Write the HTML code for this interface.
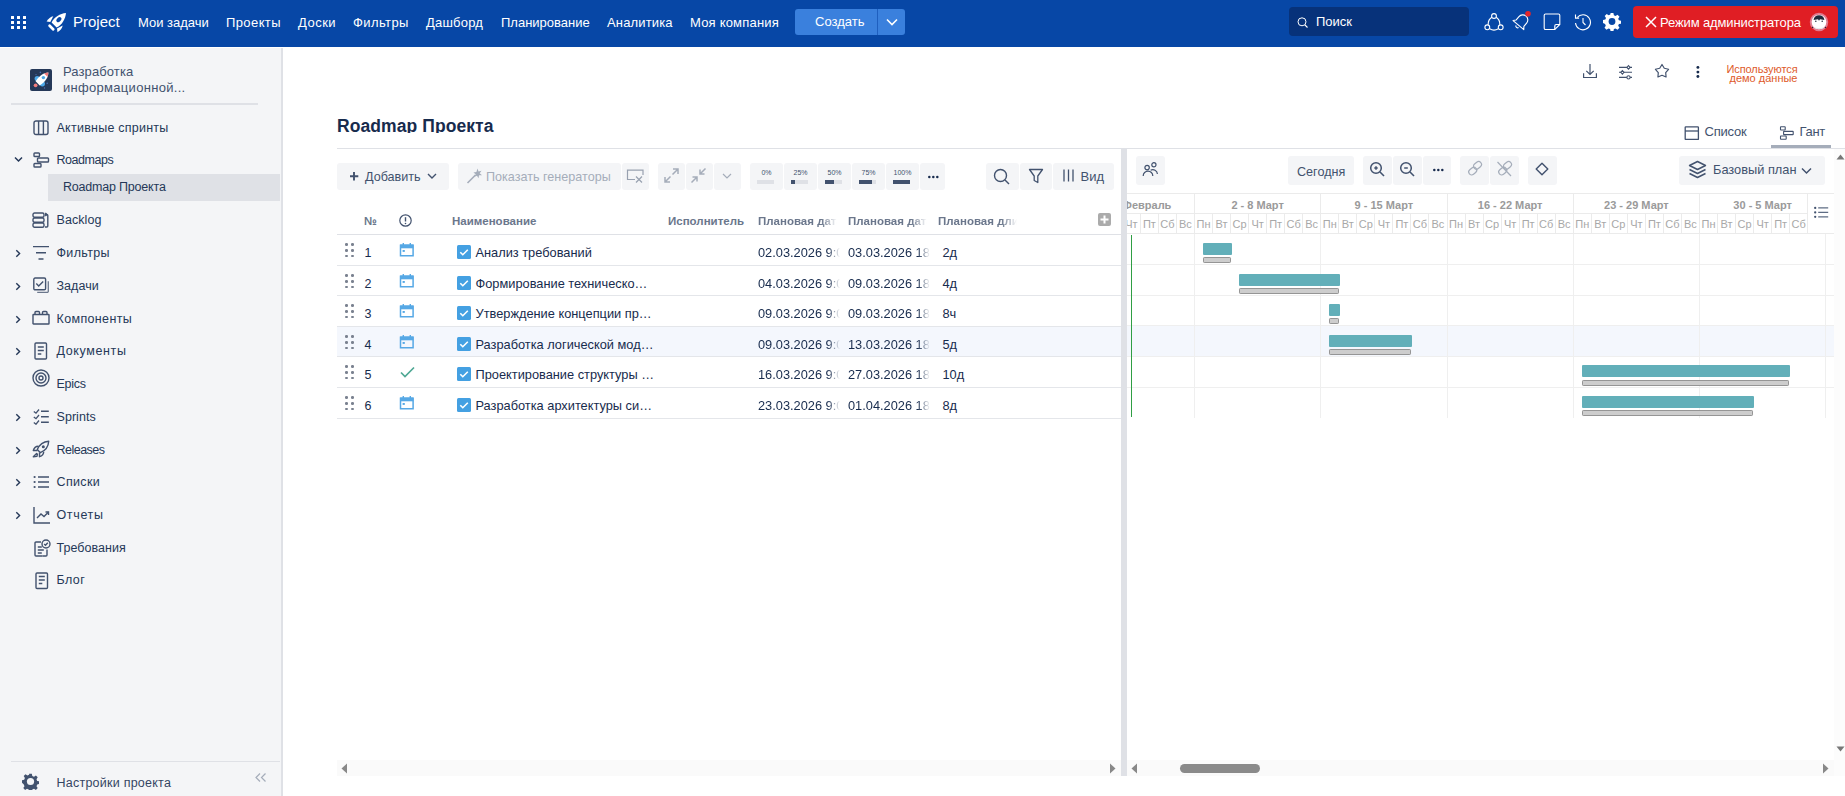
<!DOCTYPE html><html><head><meta charset="utf-8"><style>
html,body{margin:0;padding:0;width:1845px;height:796px;overflow:hidden;background:#fff;font-family:"Liberation Sans",sans-serif;}
.t{position:absolute;white-space:nowrap;}
.r{position:absolute;}
</style></head><body>
<div class="r" style="left:0px;top:0px;width:1845px;height:47px;background:#0747A6;"></div>
<div class="r" style="left:11px;top:15.5px;width:3px;height:3px;background:#fff;border-radius:0.3px"></div>
<div class="r" style="left:11px;top:20.5px;width:3px;height:3px;background:#fff;border-radius:0.3px"></div>
<div class="r" style="left:11px;top:25.5px;width:3px;height:3px;background:#fff;border-radius:0.3px"></div>
<div class="r" style="left:17px;top:15.5px;width:3px;height:3px;background:#fff;border-radius:0.3px"></div>
<div class="r" style="left:17px;top:20.5px;width:3px;height:3px;background:#fff;border-radius:0.3px"></div>
<div class="r" style="left:17px;top:25.5px;width:3px;height:3px;background:#fff;border-radius:0.3px"></div>
<div class="r" style="left:23px;top:15.5px;width:3px;height:3px;background:#fff;border-radius:0.3px"></div>
<div class="r" style="left:23px;top:20.5px;width:3px;height:3px;background:#fff;border-radius:0.3px"></div>
<div class="r" style="left:23px;top:25.5px;width:3px;height:3px;background:#fff;border-radius:0.3px"></div>
<svg class="r" style="left:40px;top:8px;" width="32" height="30" viewBox="0 0 32 30" fill="none"><path d="M26 4.9C20 5.5 14.2 9 11.6 14.4l5 5C22 16.8 25.4 11 26 4.9z" fill="#fff"/><ellipse cx="18.9" cy="11.6" rx="2" ry="2.9" transform="rotate(45 18.9 11.6)" fill="#0747A6"/><path d="M6.6 13.4C8.3 10.5 10.8 8.6 13.3 8.2L10.3 13.9z" fill="#fff"/><path d="M17.5 24.3C20.4 22.6 22.3 20.1 22.7 17.6L17 20.6z" fill="#fff"/><rect x="7.6" y="18.2" width="7.6" height="2.6" rx="1" transform="rotate(45 11.4 19.5)" fill="#fff"/></svg>
<div class="t " style="left:73px;top:11.80px;font-size:15px;line-height:20px;color:#fff;font-weight:normal;">Project</div>
<div class="t " style="left:138px;top:14.00px;font-size:13px;line-height:17px;color:#fff;font-weight:normal;letter-spacing:0px">Мои задачи</div>
<div class="t " style="left:226px;top:14.00px;font-size:13px;line-height:17px;color:#fff;font-weight:normal;letter-spacing:0.4px">Проекты</div>
<div class="t " style="left:298px;top:14.00px;font-size:13px;line-height:17px;color:#fff;font-weight:normal;letter-spacing:0.5px">Доски</div>
<div class="t " style="left:353px;top:14.00px;font-size:13px;line-height:17px;color:#fff;font-weight:normal;letter-spacing:0.4px">Фильтры</div>
<div class="t " style="left:426px;top:14.00px;font-size:13px;line-height:17px;color:#fff;font-weight:normal;letter-spacing:0.2px">Дашборд</div>
<div class="t " style="left:501px;top:14.00px;font-size:13px;line-height:17px;color:#fff;font-weight:normal;letter-spacing:0px">Планирование</div>
<div class="t " style="left:607px;top:14.00px;font-size:13px;line-height:17px;color:#fff;font-weight:normal;letter-spacing:0.15px">Аналитика</div>
<div class="t " style="left:690px;top:14.00px;font-size:13px;line-height:17px;color:#fff;font-weight:normal;letter-spacing:0.2px">Моя компания</div>
<div class="r" style="left:795px;top:9px;width:110px;height:26px;background:#3A80DD;border-radius:3px"></div>
<div class="r" style="left:877px;top:9px;width:1px;height:26px;background:#1F5FBF;"></div>
<div class="t " style="left:815px;top:12.50px;font-size:13px;line-height:17px;color:#fff;font-weight:normal;">Создать</div>
<svg class="r" style="left:886px;top:18px;" width="12" height="8" viewBox="0 0 12 8" fill="none"><path d="M1 1.5l5 5 5-5" stroke="#fff" stroke-width="1.6"/></svg>
<div class="r" style="left:1289px;top:7px;width:180px;height:29px;background:#07327A;border-radius:4px"></div>
<svg class="r" style="left:1297px;top:17px;" width="12" height="11" viewBox="0 0 12 11" fill="none"><circle cx="5" cy="4.8" r="4" stroke="#fff" stroke-width="1"/><path d="M8 8l2.5 2.5" stroke="#fff" stroke-width="1.1"/></svg>
<div class="t " style="left:1316px;top:13.00px;font-size:13px;line-height:17px;color:#fff;font-weight:normal;">Поиск</div>
<svg class="r" style="left:1484px;top:12px;" width="20" height="20" viewBox="0 0 20 20" fill="none"><circle cx="10" cy="4" r="2.4" stroke="#fff" stroke-width="1.1"/><circle cx="3.3" cy="15.3" r="2.4" stroke="#fff" stroke-width="1.1"/><circle cx="16.7" cy="15.3" r="2.4" stroke="#fff" stroke-width="1.1"/><path d="M7.8 5.3C5.5 6.8 4 9.5 4.2 12.9M12.2 5.3c2.3 1.5 3.8 4.2 3.6 7.6M5.7 16.8c2.6 1.6 6 1.6 8.6 0" stroke="#fff" stroke-width="1.1"/></svg>
<svg class="r" style="left:1511px;top:11px;" width="20" height="21" viewBox="0 0 20 21" fill="none"><g transform="rotate(40 10 11)"><path d="M10 3.2a5 5 0 0 0-5 5v4.3l-2 2.5h14l-2-2.5V8.2a5 5 0 0 0-5-5z" stroke="#fff" stroke-width="1.1" stroke-linejoin="round"/><path d="M8.3 16.8a1.8 1.8 0 0 0 3.4 0" stroke="#fff" stroke-width="1.1"/></g><circle cx="17" cy="2.8" r="2.8" fill="#E5252A"/></svg>
<svg class="r" style="left:1543px;top:13px;" width="18" height="18" viewBox="0 0 18 18" fill="none"><path d="M2.5 1h13a1.3 1.3 0 0 1 1.3 1.3V11.5l-5 5H2.5A1.3 1.3 0 0 1 1.2 15.2V2.3A1.3 1.3 0 0 1 2.5 1z" stroke="#fff" stroke-width="1.1"/><path d="M16.8 11.5h-3.6a1.4 1.4 0 0 0-1.4 1.4v3.6" stroke="#fff" stroke-width="1.2"/></svg>
<svg class="r" style="left:1574px;top:13px;" width="18" height="18" viewBox="0 0 18 18" fill="none"><path d="M3.2 4.5A7.5 7.5 0 1 1 1.5 10" stroke="#fff" stroke-width="1.1"/><path d="M1.5 1.5v3.6h3.6" stroke="#fff" stroke-width="1.1"/><path d="M9 5v4.5l2.5 2.5" stroke="#fff" stroke-width="1.1"/></svg>
<svg class="r" style="left:1603px;top:12px;" width="18" height="19" viewBox="0 0 18 19" fill="none"><path d="M7.6 1h2.8l.5 2.3 1.6.7 2-1.3 2 2-1.3 2 .7 1.6 2.3.5v2.8l-2.3.5-.7 1.6 1.3 2-2 2-2-1.3-1.6.7-.5 2.3H7.6l-.5-2.3-1.6-.7-2 1.3-2-2 1.3-2-.7-1.6L0 10.9V8.1l2.3-.5.7-1.6-1.3-2 2-2 2 1.3 1.6-.7z" fill="#fff" transform="translate(0 0)"/><circle cx="9" cy="9.5" r="3.4" fill="#0747A6"/></svg>
<div class="r" style="left:1633px;top:6px;width:205px;height:32px;background:#E01E24;border-radius:4px"></div>
<svg class="r" style="left:1645px;top:16px;" width="12" height="12" viewBox="0 0 12 12" fill="none"><path d="M1 1l10 10M11 1L1 11" stroke="#fff" stroke-width="1.5"/></svg>
<div class="t " style="left:1660px;top:13.80px;font-size:13px;line-height:17px;color:#fff;font-weight:normal;letter-spacing:-0.12px">Режим администратора</div>
<svg class="r" style="left:1809px;top:12px;" width="20" height="20" viewBox="0 0 20 20" fill="none"><circle cx="10" cy="10" r="8.3" fill="#fff" stroke="#E27C90" stroke-width="1.9"/><path d="M4.6 8C4.8 5 7 3.2 10 3.2S15.2 5 15.4 8L11 7.2 10 8.8 9 7.2z" fill="#1E2A3A"/><circle cx="6.8" cy="9.3" r=".75" fill="#1E2A3A"/><circle cx="13.2" cy="9.3" r=".75" fill="#1E2A3A"/><circle cx="3.5" cy="15.5" r=".7" fill="#1E2A3A"/><circle cx="16.5" cy="15.5" r=".7" fill="#1E2A3A"/><path d="M5 15.5c3 1.5 7 1.5 10 0" stroke="#E6E8EB" stroke-width="1"/></svg>
<div class="r" style="left:0px;top:48px;width:282px;height:748px;background:#F4F5F7;"></div>
<div class="r" style="left:281px;top:48px;width:2px;height:748px;background:#DFE1E6;"></div>
<div class="r" style="left:30px;top:69px;width:22px;height:22px;background:#253858;border-radius:2px"></div>
<svg class="r" style="left:30px;top:69px;" width="22" height="22" viewBox="0 0 22 22" fill="none"><circle cx="7.2" cy="9.6" r="2.6" fill="#4EA8E8"/><circle cx="12.4" cy="14.8" r="2.6" fill="#4EA8E8"/><circle cx="5.6" cy="16.3" r="1.9" fill="#F07C7C"/><path d="M18.4 3.4C14 3.6 9.4 6.4 5.6 12.3l4.1 4.1C15.6 12.6 18.3 8 18.4 3.4z" fill="#fff"/><path d="M18.4 3.4c-1.5.1-2.9.4-4.3 1l3.3 3.3c.6-1.4.9-2.8 1-4.3z" fill="#F07C7C"/><circle cx="13.4" cy="8.6" r="1.7" fill="#4EA8E8"/><circle cx="10.4" cy="3.4" r=".8" fill="#4A6FB5"/><circle cx="6" cy="5.6" r=".6" fill="#4A6FB5"/><circle cx="17.2" cy="14.2" r=".8" fill="#4A6FB5"/><circle cx="14.5" cy="19" r=".7" fill="#4A6FB5"/></svg>
<div class="t " style="left:63px;top:63.00px;font-size:13px;line-height:17px;color:#42526E;font-weight:normal;letter-spacing:0.1px">Разработка</div>
<div class="t " style="left:63px;top:79.00px;font-size:13px;line-height:17px;color:#42526E;font-weight:normal;letter-spacing:0.3px">информационной...</div>
<div class="r" style="left:11px;top:103px;width:247px;height:2px;background:#DFE1E6;"></div>
<svg class="r" style="left:33px;top:120px;" width="16" height="16" viewBox="0 0 16 16" fill="none"><rect x="1" y="1" width="14" height="13.5" rx="2" stroke="#42526E" stroke-width="1.4"/><path d="M5.6 1v13.5M10.4 1v13.5" stroke="#42526E" stroke-width="1.4"/></svg>
<div class="t " style="left:56.5px;top:119.67px;font-size:12.5px;line-height:16px;color:#253858;font-weight:normal;letter-spacing:0.243px">Активные спринты</div>
<svg class="r" style="left:14px;top:156px;" width="9" height="7" viewBox="0 0 9 7" fill="none"><path d="M1 1.5l3.5 3.5L8 1.5" stroke="#253858" stroke-width="1.5"/></svg>
<svg class="r" style="left:33px;top:152px;" width="17" height="17" viewBox="0 0 17 17" fill="none"><rect x="1" y="1" width="5.5" height="3.5" rx=".8" stroke="#42526E" stroke-width="1.4"/><rect x="4.5" y="6" width="11" height="4" rx=".8" stroke="#42526E" stroke-width="1.4"/><rect x="1" y="11.5" width="7" height="3.5" rx=".8" stroke="#42526E" stroke-width="1.4"/></svg>
<div class="t " style="left:56.5px;top:151.67px;font-size:12.5px;line-height:16px;color:#253858;font-weight:normal;letter-spacing:-0.450px">Roadmaps</div>
<svg class="r" style="left:32px;top:212px;" width="17" height="17" viewBox="0 0 17 17" fill="none"><rect x="1" y="1" width="11" height="4.3" rx="1.5" stroke="#42526E" stroke-width="1.4"/><rect x="1" y="6" width="11" height="4.3" rx="1.5" stroke="#42526E" stroke-width="1.4"/><rect x="1" y="11" width="11" height="4.3" rx="1.5" stroke="#42526E" stroke-width="1.4"/><path d="M13 2.5h1.8a1 1 0 0 1 1 1v10.5a1 1 0 0 1-1 1H13" stroke="#42526E" stroke-width="1.4"/><path d="M13.3 1l1.5 1.5-1.5 1.5" stroke="#42526E" stroke-width="1.4"/></svg>
<div class="t " style="left:56.5px;top:211.67px;font-size:12.5px;line-height:16px;color:#253858;font-weight:normal;letter-spacing:0.067px">Backlog</div>
<svg class="r" style="left:14px;top:248.5px;" width="8" height="9" viewBox="0 0 8 9" fill="none"><path d="M2.3 1.2l3.3 3.3-3.3 3.3" stroke="#253858" stroke-width="1.4"/></svg>
<svg class="r" style="left:32px;top:245px;" width="18" height="16" viewBox="0 0 18 16" fill="none"><path d="M1 1.6h16M4 7.7h10M6.5 14h5" stroke="#42526E" stroke-width="1.4"/></svg>
<div class="t " style="left:56.5px;top:244.67px;font-size:12.5px;line-height:16px;color:#253858;font-weight:normal;letter-spacing:0.350px">Фильтры</div>
<svg class="r" style="left:14px;top:281.5px;" width="8" height="9" viewBox="0 0 8 9" fill="none"><path d="M2.3 1.2l3.3 3.3-3.3 3.3" stroke="#253858" stroke-width="1.4"/></svg>
<svg class="r" style="left:33px;top:277px;" width="17" height="17" viewBox="0 0 17 17" fill="none"><rect x="0.8" y="1" width="11.8" height="11.8" rx="1.3" stroke="#42526E" stroke-width="1.4"/><path d="M3.3 6.6l2.4 2.4 4.5-4.6" stroke="#42526E" stroke-width="1.4"/><path d="M15.3 4.2v10a1.2 1.2 0 0 1-1.2 1.2H4.2" stroke="#6B778C" stroke-width="1.3"/></svg>
<div class="t " style="left:56.5px;top:277.67px;font-size:12.5px;line-height:16px;color:#253858;font-weight:normal;letter-spacing:0.050px">Задачи</div>
<svg class="r" style="left:14px;top:314.5px;" width="8" height="9" viewBox="0 0 8 9" fill="none"><path d="M2.3 1.2l3.3 3.3-3.3 3.3" stroke="#253858" stroke-width="1.4"/></svg>
<svg class="r" style="left:32px;top:310px;" width="18" height="16" viewBox="0 0 18 16" fill="none"><rect x="1" y="4.5" width="16" height="9.5" rx=".5" stroke="#42526E" stroke-width="1.4"/><path d="M3 4.5V2.5a1 1 0 0 1 1-1h2.5a1 1 0 0 1 1 1v2M10.5 4.5V2.5a1 1 0 0 1 1-1H14a1 1 0 0 1 1 1v2" stroke="#42526E" stroke-width="1.4"/></svg>
<div class="t " style="left:56.5px;top:310.67px;font-size:12.5px;line-height:16px;color:#253858;font-weight:normal;letter-spacing:0.361px">Компоненты</div>
<svg class="r" style="left:14px;top:346.5px;" width="8" height="9" viewBox="0 0 8 9" fill="none"><path d="M2.3 1.2l3.3 3.3-3.3 3.3" stroke="#253858" stroke-width="1.4"/></svg>
<svg class="r" style="left:34px;top:342px;" width="14" height="18" viewBox="0 0 14 18" fill="none"><rect x="1" y="1" width="11.5" height="16" rx="1" stroke="#42526E" stroke-width="1.4"/><path d="M3.8 5h6M3.8 8.5h6M3.8 12h3.5" stroke="#42526E" stroke-width="1.4"/></svg>
<div class="t " style="left:56.5px;top:342.67px;font-size:12.5px;line-height:16px;color:#253858;font-weight:normal;letter-spacing:0.625px">Документы</div>
<svg class="r" style="left:32px;top:369px;" width="18" height="18" viewBox="0 0 18 18" fill="none"><circle cx="9" cy="9" r="8" stroke="#42526E" stroke-width="1.4"/><circle cx="9" cy="9" r="5" stroke="#42526E" stroke-width="1.4"/><circle cx="9" cy="9" r="2" stroke="#42526E" stroke-width="1.4"/></svg>
<div class="t " style="left:56.5px;top:375.67px;font-size:12.5px;line-height:16px;color:#253858;font-weight:normal;letter-spacing:-0.250px">Epics</div>
<svg class="r" style="left:14px;top:412.5px;" width="8" height="9" viewBox="0 0 8 9" fill="none"><path d="M2.3 1.2l3.3 3.3-3.3 3.3" stroke="#253858" stroke-width="1.4"/></svg>
<svg class="r" style="left:33px;top:408px;" width="17" height="17" viewBox="0 0 17 17" fill="none"><path d="M0.8 3.4l2.2 1.8L6 1.5M0.8 8.9l2.2 1.8L6 7M0.8 14.4l2.2 1.8L6 12.5" stroke="#42526E" stroke-width="1.3"/><path d="M8 3.3h7.8M8 8.8h7.8M8 14.3h7.8" stroke="#42526E" stroke-width="1.4"/></svg>
<div class="t " style="left:56.5px;top:408.67px;font-size:12.5px;line-height:16px;color:#253858;font-weight:normal;letter-spacing:0.050px">Sprints</div>
<svg class="r" style="left:14px;top:445.5px;" width="8" height="9" viewBox="0 0 8 9" fill="none"><path d="M2.3 1.2l3.3 3.3-3.3 3.3" stroke="#253858" stroke-width="1.4"/></svg>
<svg class="r" style="left:32px;top:440px;" width="18" height="18" viewBox="0 0 18 18" fill="none"><path d="M16.7 1.3C11 1.6 7.3 4.8 5.3 9.6l3.1 3.1c4.8-2 8-5.7 8.3-11.4z" stroke="#42526E" stroke-width="1.4" stroke-linejoin="round"/><path d="M6.3 6.3C3.9 6.4 2 8.1 1.3 10.5h4.2M11.7 11.7c-.1 2.4-1.8 4.3-4.2 5V12.5" stroke="#42526E" stroke-width="1.4" stroke-linejoin="round"/><path d="M4.6 13.4L1.3 16.7l3.6-.3.5-2.2z" stroke="#42526E" stroke-width="1.4" stroke-linejoin="round"/><circle cx="11.3" cy="6.7" r="1.5" fill="#42526E"/></svg>
<div class="t " style="left:56.5px;top:441.67px;font-size:12.5px;line-height:16px;color:#253858;font-weight:normal;letter-spacing:-0.507px">Releases</div>
<svg class="r" style="left:14px;top:477.5px;" width="8" height="9" viewBox="0 0 8 9" fill="none"><path d="M2.3 1.2l3.3 3.3-3.3 3.3" stroke="#253858" stroke-width="1.4"/></svg>
<svg class="r" style="left:33px;top:475px;" width="17" height="14" viewBox="0 0 17 14" fill="none"><circle cx="1.6" cy="2" r="1.1" fill="#42526E"/><circle cx="1.6" cy="7" r="1.1" fill="#42526E"/><circle cx="1.6" cy="12" r="1.1" fill="#42526E"/><path d="M5 2h11M5 7h11M5 12h11" stroke="#42526E" stroke-width="1.4"/></svg>
<div class="t " style="left:56.5px;top:474.17px;font-size:12.5px;line-height:16px;color:#253858;font-weight:normal;letter-spacing:0.350px">Списки</div>
<svg class="r" style="left:14px;top:510.5px;" width="8" height="9" viewBox="0 0 8 9" fill="none"><path d="M2.3 1.2l3.3 3.3-3.3 3.3" stroke="#253858" stroke-width="1.4"/></svg>
<svg class="r" style="left:33px;top:507px;" width="17" height="17" viewBox="0 0 17 17" fill="none"><path d="M1 0v16h16" stroke="#42526E" stroke-width="1.4"/><path d="M4 11l4-4 3 2.5L15.5 5" stroke="#42526E" stroke-width="1.4"/><path d="M12.5 5h3v3" stroke="#42526E" stroke-width="1.4"/></svg>
<div class="t " style="left:56.5px;top:507.17px;font-size:12.5px;line-height:16px;color:#253858;font-weight:normal;letter-spacing:0.650px">Отчеты</div>
<svg class="r" style="left:34px;top:539px;" width="17" height="18" viewBox="0 0 17 18" fill="none"><path d="M8.5 17H2a1 1 0 0 1-1-1V4a1 1 0 0 1 1-1h5" stroke="#42526E" stroke-width="1.4"/><path d="M13 10.5V16a1 1 0 0 1-1 1H8.5" stroke="#42526E" stroke-width="1.4"/><path d="M3.8 8h4M3.8 11h6M3.8 14h4" stroke="#42526E" stroke-width="1.4"/><circle cx="12" cy="5" r="4" stroke="#42526E" stroke-width="1.4"/><path d="M10.2 5l1.3 1.3 2.3-2.5" stroke="#42526E" stroke-width="1.4"/></svg>
<div class="t " style="left:56.5px;top:539.67px;font-size:12.5px;line-height:16px;color:#253858;font-weight:normal;letter-spacing:0.028px">Требования</div>
<svg class="r" style="left:35px;top:572px;" width="14" height="18" viewBox="0 0 14 18" fill="none"><rect x="1" y="1" width="11.5" height="15.5" rx="1" stroke="#42526E" stroke-width="1.4"/><path d="M3.8 4.5h6M3.8 8h6M3.8 11.5h3.5" stroke="#42526E" stroke-width="1.4"/></svg>
<div class="t " style="left:56.5px;top:571.67px;font-size:12.5px;line-height:16px;color:#253858;font-weight:normal;letter-spacing:0.417px">Блог</div>
<div class="r" style="left:48px;top:174px;width:232px;height:27px;background:#DFE1E6;"></div>
<div class="t " style="left:63px;top:179.27px;font-size:12.5px;line-height:16px;color:#253858;font-weight:normal;letter-spacing:-0.2px">Roadmap Проекта</div>
<div class="r" style="left:11px;top:761px;width:269px;height:1px;background:#DFE1E6;"></div>
<svg class="r" style="left:22px;top:773px;" width="17" height="17" viewBox="0 0 17 17" fill="none"><path d="M7.2 0.8h2.6l.5 2.2 1.7.7 1.9-1.2 1.8 1.8-1.2 1.9.7 1.7 2.2.5v2.6l-2.2.5-.7 1.7 1.2 1.9-1.8 1.8-1.9-1.2-1.7.7-.5 2.2H7.2l-.5-2.2-1.7-.7-1.9 1.2-1.8-1.8 1.2-1.9-.7-1.7L0 9.8V7.2l2.2-.5.7-1.7L1.7 3.1l1.8-1.8 1.9 1.2 1.7-.7z" fill="#42526E"/><circle cx="8.5" cy="8.5" r="3.6" fill="#F4F5F7"/></svg>
<div class="t " style="left:56.5px;top:774.67px;font-size:12.5px;line-height:16px;color:#344563;font-weight:normal;letter-spacing:0.24px">Настройки проекта</div>
<svg class="r" style="left:254px;top:772px;" width="13" height="11" viewBox="0 0 13 11" fill="none"><path d="M6 1.5L2 5.5l4 4M11.5 1.5l-4 4 4 4" stroke="#A5ADBA" stroke-width="1.2"/></svg>
<svg class="r" style="left:1582px;top:63px;" width="16" height="16" viewBox="0 0 16 16" fill="none"><path d="M8 1v10.5M4.3 7.8L8 11.5l3.7-3.7" stroke="#42526E" stroke-width="1.2"/><path d="M1.6 10.3v4.2h12.8v-4.2" stroke="#42526E" stroke-width="1.2"/></svg>
<svg class="r" style="left:1617px;top:63px;" width="17" height="17" viewBox="0 0 17 17" fill="none"><path d="M2 4.4h13M2 9.3h13M2 14.4h13" stroke="#42526E" stroke-width="1.1"/><path d="M11.5 2.6l1.6 1.8-1.6 1.8-1.6-1.8z" fill="#fff" stroke="#42526E" stroke-width="1.1"/><path d="M5.4 7.5l1.6 1.8-1.6 1.8-1.6-1.8z" fill="#fff" stroke="#42526E" stroke-width="1.1"/><circle cx="11.5" cy="14.4" r="1.6" fill="#fff" stroke="#42526E" stroke-width="1.1"/></svg>
<svg class="r" style="left:1654px;top:63px;" width="16" height="16" viewBox="0 0 16 16" fill="none"><path d="M8.00 1.50 L10.29 5.24 L14.56 6.27 L11.71 9.61 L12.06 13.98 L8.00 12.30 L3.94 13.98 L4.29 9.61 L1.44 6.27 L5.71 5.24z" stroke="#42526E" stroke-width="1.2" stroke-linejoin="round"/></svg>
<svg class="r" style="left:1694px;top:62px;" width="8" height="18" viewBox="0 0 8 18" fill="none"><circle cx="3.9" cy="5.4" r="1.45" fill="#172B4D"/><circle cx="3.9" cy="10.1" r="1.45" fill="#172B4D"/><circle cx="3.9" cy="14.5" r="1.45" fill="#172B4D"/></svg>
<div class="t " style="left:1726.5px;top:62.39px;font-size:11px;line-height:14px;color:#DE5A2A;font-weight:normal;letter-spacing:-0.1px">Используются</div>
<div class="t " style="left:1729.5px;top:73.49px;font-size:11px;line-height:10px;color:#DE5A2A;font-weight:normal;">демо данные</div>
<div class="r" style="left:337px;top:110px;width:300px;height:23px;overflow:hidden">
<div class="t" style="left:0;top:4.74px;font-size:17.5px;line-height:22px;color:#172B4D;font-weight:bold;letter-spacing:0.08px">Roadmap Проекта</div>
</div>
<svg class="r" style="left:1684px;top:126px;" width="16" height="14" viewBox="0 0 16 14" fill="none"><rect x="1.2" y="0.9" width="13.2" height="12.6" rx=".6" stroke="#42526E" stroke-width="1.3"/><path d="M1 5h14" stroke="#42526E" stroke-width="1.3"/></svg>
<div class="t " style="left:1704.5px;top:123.00px;font-size:13px;line-height:17px;color:#42526E;font-weight:normal;letter-spacing:-0.2px">Список</div>
<svg class="r" style="left:1779px;top:126px;" width="16" height="14" viewBox="0 0 16 14" fill="none"><rect x="1.5" y="0.8" width="4.7" height="3.2" rx=".4" stroke="#42526E" stroke-width="1.1"/><rect x="4.6" y="5.4" width="9.6" height="3.2" rx=".4" stroke="#42526E" stroke-width="1.1"/><rect x="1.5" y="10" width="5.7" height="3.2" rx=".4" stroke="#42526E" stroke-width="1.1"/></svg>
<div class="t " style="left:1799.5px;top:123.00px;font-size:13px;line-height:17px;color:#42526E;font-weight:normal;letter-spacing:-0.3px">Гант</div>
<div class="r" style="left:337px;top:148px;width:1508px;height:1px;background:#DFE1E6;"></div>
<div class="r" style="left:1771px;top:145px;width:60px;height:3px;background:#A5ADBA;"></div>
<div class="r" style="left:337px;top:163px;width:112px;height:27px;background:#F4F5F7;border-radius:3px"></div>
<svg class="r" style="left:349px;top:171px;" width="10" height="10" viewBox="0 0 10 10" fill="none"><path d="M5 1v8.5M1 5.2h8.3" stroke="#42526E" stroke-width="1.9"/></svg>
<div class="t " style="left:365px;top:168.63px;font-size:12.6px;line-height:16px;color:#42526E;font-weight:normal;">Добавить</div>
<svg class="r" style="left:427px;top:173px;" width="10" height="7" viewBox="0 0 10 7" fill="none"><path d="M1 1l4 4 4-4" stroke="#42526E" stroke-width="1.4"/></svg>
<div class="r" style="left:458px;top:163px;width:163px;height:27px;background:#F4F5F7;border-radius:3px"></div>
<svg class="r" style="left:466px;top:167px;" width="18" height="17" viewBox="0 0 18 17" fill="none"><path d="M1.5 16L9.5 8" stroke="#A5ADBA" stroke-width="1.6"/><path d="M11.5 1.5l1 3 3-.8-1.8 2.5 2.3 2-3 .1-.5 3-1.5-2.6-2.8 1 1.6-2.5-2.4-1.8 3-.5z" fill="#A5ADBA"/></svg>
<div class="t " style="left:486px;top:168.63px;font-size:12.6px;line-height:16px;color:#A5ADBA;font-weight:normal;">Показать генераторы</div>
<div class="r" style="left:622px;top:163px;width:27px;height:27px;background:#F4F5F7;border-radius:3px"></div>
<svg class="r" style="left:626px;top:168px;" width="20" height="16" viewBox="0 0 20 16" fill="none"><path d="M9 11.5H1.5V2.2h15.5V7" stroke="#98A1B0" stroke-width="1.2"/><path d="M10 8.5l6 6M16 8.5l-6 6" stroke="#98A1B0" stroke-width="1.2"/></svg>
<div class="r" style="left:658px;top:163px;width:27px;height:27px;background:#F4F5F7;border-radius:3px"></div>
<div class="r" style="left:686px;top:163px;width:27px;height:27px;background:#F4F5F7;border-radius:3px"></div>
<div class="r" style="left:714px;top:163px;width:27px;height:27px;background:#F4F5F7;border-radius:3px"></div>
<svg class="r" style="left:663px;top:167px;" width="17" height="17" viewBox="0 0 17 17" fill="none"><path d="M10 2h5v5M15 2L9.5 7.5M7 15H2v-5M2 15l5.5-5.5" stroke="#A5ADBA" stroke-width="1.5"/></svg>
<svg class="r" style="left:690px;top:167px;" width="17" height="17" viewBox="0 0 17 17" fill="none"><path d="M15.5 1.5L10 7M10 2.5V7h4.5M1.5 15.5L7 10M2.5 10H7v4.5" stroke="#A5ADBA" stroke-width="1.5"/></svg>
<svg class="r" style="left:722px;top:173px;" width="10" height="7" viewBox="0 0 10 7" fill="none"><path d="M1 1l4 4 4-4" stroke="#A5ADBA" stroke-width="1.2"/></svg>
<div class="r" style="left:750px;top:163px;width:33px;height:27px;background:#F4F5F7;border-radius:3px"></div>
<div class="t" style="left:750px;width:33px;text-align:center;top:168px;font-size:7px;line-height:9px;color:#42526E">0%</div>
<div class="r" style="left:757px;top:180px;width:17px;height:4px;background:#DFE1E6;"></div>
<div class="r" style="left:784px;top:163px;width:33px;height:27px;background:#F4F5F7;border-radius:3px"></div>
<div class="t" style="left:784px;width:33px;text-align:center;top:168px;font-size:7px;line-height:9px;color:#42526E">25%</div>
<div class="r" style="left:791px;top:180px;width:17px;height:4px;background:#DFE1E6;"></div>
<div class="r" style="left:791px;top:180px;width:4.25px;height:4px;background:#42526E;"></div>
<div class="r" style="left:818px;top:163px;width:33px;height:27px;background:#F4F5F7;border-radius:3px"></div>
<div class="t" style="left:818px;width:33px;text-align:center;top:168px;font-size:7px;line-height:9px;color:#42526E">50%</div>
<div class="r" style="left:825px;top:180px;width:17px;height:4px;background:#DFE1E6;"></div>
<div class="r" style="left:825px;top:180px;width:8.5px;height:4px;background:#42526E;"></div>
<div class="r" style="left:852px;top:163px;width:33px;height:27px;background:#F4F5F7;border-radius:3px"></div>
<div class="t" style="left:852px;width:33px;text-align:center;top:168px;font-size:7px;line-height:9px;color:#42526E">75%</div>
<div class="r" style="left:859px;top:180px;width:17px;height:4px;background:#DFE1E6;"></div>
<div class="r" style="left:859px;top:180px;width:12.75px;height:4px;background:#42526E;"></div>
<div class="r" style="left:886px;top:163px;width:33px;height:27px;background:#F4F5F7;border-radius:3px"></div>
<div class="t" style="left:886px;width:33px;text-align:center;top:168px;font-size:7px;line-height:9px;color:#42526E">100%</div>
<div class="r" style="left:893px;top:180px;width:17px;height:4px;background:#DFE1E6;"></div>
<div class="r" style="left:893px;top:180px;width:17px;height:4px;background:#42526E;"></div>
<div class="r" style="left:920px;top:163px;width:25px;height:27px;background:#F4F5F7;border-radius:3px"></div>
<svg class="r" style="left:925px;top:173px;" width="16" height="8" viewBox="0 0 16 8" fill="none"><circle cx="4.3" cy="4" r="1.25" fill="#172B4D"/><circle cx="8.3" cy="4" r="1.25" fill="#172B4D"/><circle cx="12.3" cy="4" r="1.25" fill="#172B4D"/></svg>
<div class="r" style="left:986px;top:163px;width:33px;height:27px;background:#F4F5F7;border-radius:3px"></div>
<div class="r" style="left:1020px;top:163px;width:32px;height:27px;background:#F4F5F7;border-radius:3px"></div>
<div class="r" style="left:1053px;top:163px;width:61px;height:27px;background:#F4F5F7;border-radius:3px"></div>
<svg class="r" style="left:993px;top:168px;" width="18" height="18" viewBox="0 0 18 18" fill="none"><circle cx="7.5" cy="7.5" r="6" stroke="#42526E" stroke-width="1.4"/><path d="M12 12l4 4" stroke="#42526E" stroke-width="1.4"/></svg>
<svg class="r" style="left:1028px;top:168px;" width="16" height="16" viewBox="0 0 16 16" fill="none"><path d="M1.5 1.5h13L9.8 8v6.5L6.2 12.5V8z" stroke="#42526E" stroke-width="1.3" stroke-linejoin="round"/></svg>
<svg class="r" style="left:1062px;top:168px;" width="14" height="15" viewBox="0 0 14 15" fill="none"><path d="M2 1.5v12M6.5 1.5v12M11 1.5v12" stroke="#42526E" stroke-width="1.3"/></svg>
<div class="t " style="left:1080.5px;top:168.00px;font-size:13px;line-height:17px;color:#42526E;font-weight:normal;">Вид</div>
<div class="t " style="left:364px;top:213.52px;font-size:11.5px;line-height:15px;color:#6B778C;font-weight:bold;">№</div>
<svg class="r" style="left:399px;top:214px;" width="14" height="13" viewBox="0 0 14 13" fill="none"><circle cx="6.5" cy="6.5" r="5.7" stroke="#42526E" stroke-width="1.2"/><path d="M6.5 3.2v4.3" stroke="#42526E" stroke-width="1.4"/><circle cx="6.5" cy="9.5" r=".8" fill="#42526E"/></svg>
<div class="t " style="left:452px;top:213.52px;font-size:11.5px;line-height:15px;color:#6B778C;font-weight:bold;">Наименование</div>
<div class="t " style="left:668px;top:213.52px;font-size:11.5px;line-height:15px;color:#6B778C;font-weight:bold;">Исполнитель</div>
<div class="t" style="left:758px;top:213.52px;width:79px;overflow:hidden;font-size:11.5px;line-height:15px;color:#6B778C;font-weight:bold;-webkit-mask-image:linear-gradient(90deg,#000 80%,transparent)">Плановая дата начала</div>
<div class="t" style="left:848px;top:213.52px;width:79px;overflow:hidden;font-size:11.5px;line-height:15px;color:#6B778C;font-weight:bold;-webkit-mask-image:linear-gradient(90deg,#000 80%,transparent)">Плановая дата окончания</div>
<div class="t" style="left:938px;top:213.52px;width:79px;overflow:hidden;font-size:11.5px;line-height:15px;color:#6B778C;font-weight:bold;-webkit-mask-image:linear-gradient(90deg,#000 80%,transparent)">Плановая длительность</div>
<svg class="r" style="left:1098px;top:213px;" width="13" height="13" viewBox="0 0 13 13" fill="none"><rect x="0" y="0" width="13" height="13" rx="2" fill="#ABABAB"/><path d="M6.5 2.5v8M2.5 6.5h8" stroke="#fff" stroke-width="2"/></svg>
<div class="r" style="left:337px;top:234px;width:784px;height:1px;background:#DFE1E6;"></div>
<div class="r" style="left:337px;top:265px;width:784px;height:1px;background:#E4E6EA;"></div>
<div class="r" style="left:345px;top:243.2px;width:2.5px;height:2.5px;background:#7A8290;border-radius:50%"></div>
<div class="r" style="left:345px;top:249.0px;width:2.5px;height:2.5px;background:#7A8290;border-radius:50%"></div>
<div class="r" style="left:345px;top:254.79999999999998px;width:2.5px;height:2.5px;background:#7A8290;border-radius:50%"></div>
<div class="r" style="left:351px;top:243.2px;width:2.5px;height:2.5px;background:#7A8290;border-radius:50%"></div>
<div class="r" style="left:351px;top:249.0px;width:2.5px;height:2.5px;background:#7A8290;border-radius:50%"></div>
<div class="r" style="left:351px;top:254.79999999999998px;width:2.5px;height:2.5px;background:#7A8290;border-radius:50%"></div>
<div class="t " style="left:364.5px;top:244.97px;font-size:12.5px;line-height:16px;color:#172B4D;font-weight:normal;">1</div>
<svg class="r" style="left:399px;top:242px;" width="16" height="16" viewBox="0 0 16 16" fill="none"><path d="M1.5 3.2h12.6v10.6H1.5z" stroke="#56A8E5" stroke-width="1.5"/><path d="M1.2 2.5h13.2v3.8H1.2z" fill="#56A8E5"/><path d="M4.3 1v2.5M11.3 1v2.5" stroke="#56A8E5" stroke-width="1.4"/><rect x="3.6" y="8" width="2.2" height="1.9" fill="#56A8E5"/></svg>
<div class="r" style="left:457px;top:245px;width:14px;height:14px;background:#44A0E2;border-radius:1.5px"></div>
<svg class="r" style="left:457px;top:245px;" width="14" height="14" viewBox="0 0 14 14" fill="none"><path d="M3.3 7.2l2.5 2.5 5-5" stroke="#fff" stroke-width="1.6"/></svg>
<div class="t " style="left:475.5px;top:244.86px;font-size:12.8px;line-height:16px;color:#172B4D;font-weight:normal;">Анализ требований</div>
<div class="t" style="left:758px;top:244.86px;width:82px;overflow:hidden;font-size:12.8px;line-height:16px;color:#172B4D;-webkit-mask-image:linear-gradient(90deg,#000 85%,transparent)">02.03.2026 9:00</div>
<div class="t" style="left:848px;top:244.86px;width:82px;overflow:hidden;font-size:12.8px;line-height:16px;color:#172B4D;-webkit-mask-image:linear-gradient(90deg,#000 85%,transparent)">03.03.2026 18:00</div>
<div class="t " style="left:942.5px;top:244.86px;font-size:12.8px;line-height:16px;color:#172B4D;font-weight:normal;">2д</div>
<div class="r" style="left:337px;top:295px;width:784px;height:1px;background:#E4E6EA;"></div>
<div class="r" style="left:345px;top:274.2px;width:2.5px;height:2.5px;background:#7A8290;border-radius:50%"></div>
<div class="r" style="left:345px;top:280.0px;width:2.5px;height:2.5px;background:#7A8290;border-radius:50%"></div>
<div class="r" style="left:345px;top:285.8px;width:2.5px;height:2.5px;background:#7A8290;border-radius:50%"></div>
<div class="r" style="left:351px;top:274.2px;width:2.5px;height:2.5px;background:#7A8290;border-radius:50%"></div>
<div class="r" style="left:351px;top:280.0px;width:2.5px;height:2.5px;background:#7A8290;border-radius:50%"></div>
<div class="r" style="left:351px;top:285.8px;width:2.5px;height:2.5px;background:#7A8290;border-radius:50%"></div>
<div class="t " style="left:364.5px;top:275.97px;font-size:12.5px;line-height:16px;color:#172B4D;font-weight:normal;">2</div>
<svg class="r" style="left:399px;top:273px;" width="16" height="16" viewBox="0 0 16 16" fill="none"><path d="M1.5 3.2h12.6v10.6H1.5z" stroke="#56A8E5" stroke-width="1.5"/><path d="M1.2 2.5h13.2v3.8H1.2z" fill="#56A8E5"/><path d="M4.3 1v2.5M11.3 1v2.5" stroke="#56A8E5" stroke-width="1.4"/><rect x="3.6" y="8" width="2.2" height="1.9" fill="#56A8E5"/></svg>
<div class="r" style="left:457px;top:276px;width:14px;height:14px;background:#44A0E2;border-radius:1.5px"></div>
<svg class="r" style="left:457px;top:276px;" width="14" height="14" viewBox="0 0 14 14" fill="none"><path d="M3.3 7.2l2.5 2.5 5-5" stroke="#fff" stroke-width="1.6"/></svg>
<div class="t " style="left:475.5px;top:275.86px;font-size:12.8px;line-height:16px;color:#172B4D;font-weight:normal;">Формирование техническо…</div>
<div class="t" style="left:758px;top:275.86px;width:82px;overflow:hidden;font-size:12.8px;line-height:16px;color:#172B4D;-webkit-mask-image:linear-gradient(90deg,#000 85%,transparent)">04.03.2026 9:00</div>
<div class="t" style="left:848px;top:275.86px;width:82px;overflow:hidden;font-size:12.8px;line-height:16px;color:#172B4D;-webkit-mask-image:linear-gradient(90deg,#000 85%,transparent)">09.03.2026 18:00</div>
<div class="t " style="left:942.5px;top:275.86px;font-size:12.8px;line-height:16px;color:#172B4D;font-weight:normal;">4д</div>
<div class="r" style="left:337px;top:326px;width:784px;height:1px;background:#E4E6EA;"></div>
<div class="r" style="left:345px;top:304.2px;width:2.5px;height:2.5px;background:#7A8290;border-radius:50%"></div>
<div class="r" style="left:345px;top:310.0px;width:2.5px;height:2.5px;background:#7A8290;border-radius:50%"></div>
<div class="r" style="left:345px;top:315.8px;width:2.5px;height:2.5px;background:#7A8290;border-radius:50%"></div>
<div class="r" style="left:351px;top:304.2px;width:2.5px;height:2.5px;background:#7A8290;border-radius:50%"></div>
<div class="r" style="left:351px;top:310.0px;width:2.5px;height:2.5px;background:#7A8290;border-radius:50%"></div>
<div class="r" style="left:351px;top:315.8px;width:2.5px;height:2.5px;background:#7A8290;border-radius:50%"></div>
<div class="t " style="left:364.5px;top:305.97px;font-size:12.5px;line-height:16px;color:#172B4D;font-weight:normal;">3</div>
<svg class="r" style="left:399px;top:303px;" width="16" height="16" viewBox="0 0 16 16" fill="none"><path d="M1.5 3.2h12.6v10.6H1.5z" stroke="#56A8E5" stroke-width="1.5"/><path d="M1.2 2.5h13.2v3.8H1.2z" fill="#56A8E5"/><path d="M4.3 1v2.5M11.3 1v2.5" stroke="#56A8E5" stroke-width="1.4"/><rect x="3.6" y="8" width="2.2" height="1.9" fill="#56A8E5"/></svg>
<div class="r" style="left:457px;top:306px;width:14px;height:14px;background:#44A0E2;border-radius:1.5px"></div>
<svg class="r" style="left:457px;top:306px;" width="14" height="14" viewBox="0 0 14 14" fill="none"><path d="M3.3 7.2l2.5 2.5 5-5" stroke="#fff" stroke-width="1.6"/></svg>
<div class="t " style="left:475.5px;top:305.86px;font-size:12.8px;line-height:16px;color:#172B4D;font-weight:normal;">Утверждение концепции пр…</div>
<div class="t" style="left:758px;top:305.86px;width:82px;overflow:hidden;font-size:12.8px;line-height:16px;color:#172B4D;-webkit-mask-image:linear-gradient(90deg,#000 85%,transparent)">09.03.2026 9:00</div>
<div class="t" style="left:848px;top:305.86px;width:82px;overflow:hidden;font-size:12.8px;line-height:16px;color:#172B4D;-webkit-mask-image:linear-gradient(90deg,#000 85%,transparent)">09.03.2026 18:00</div>
<div class="t " style="left:942.5px;top:305.86px;font-size:12.8px;line-height:16px;color:#172B4D;font-weight:normal;">8ч</div>
<div class="r" style="left:337px;top:327px;width:784px;height:29px;background:#F4F7FD;"></div>
<div class="r" style="left:337px;top:356px;width:784px;height:1px;background:#E4E6EA;"></div>
<div class="r" style="left:345px;top:335.2px;width:2.5px;height:2.5px;background:#7A8290;border-radius:50%"></div>
<div class="r" style="left:345px;top:341.0px;width:2.5px;height:2.5px;background:#7A8290;border-radius:50%"></div>
<div class="r" style="left:345px;top:346.8px;width:2.5px;height:2.5px;background:#7A8290;border-radius:50%"></div>
<div class="r" style="left:351px;top:335.2px;width:2.5px;height:2.5px;background:#7A8290;border-radius:50%"></div>
<div class="r" style="left:351px;top:341.0px;width:2.5px;height:2.5px;background:#7A8290;border-radius:50%"></div>
<div class="r" style="left:351px;top:346.8px;width:2.5px;height:2.5px;background:#7A8290;border-radius:50%"></div>
<div class="t " style="left:364.5px;top:336.97px;font-size:12.5px;line-height:16px;color:#172B4D;font-weight:normal;">4</div>
<svg class="r" style="left:399px;top:334px;" width="16" height="16" viewBox="0 0 16 16" fill="none"><path d="M1.5 3.2h12.6v10.6H1.5z" stroke="#56A8E5" stroke-width="1.5"/><path d="M1.2 2.5h13.2v3.8H1.2z" fill="#56A8E5"/><path d="M4.3 1v2.5M11.3 1v2.5" stroke="#56A8E5" stroke-width="1.4"/><rect x="3.6" y="8" width="2.2" height="1.9" fill="#56A8E5"/></svg>
<div class="r" style="left:457px;top:337px;width:14px;height:14px;background:#44A0E2;border-radius:1.5px"></div>
<svg class="r" style="left:457px;top:337px;" width="14" height="14" viewBox="0 0 14 14" fill="none"><path d="M3.3 7.2l2.5 2.5 5-5" stroke="#fff" stroke-width="1.6"/></svg>
<div class="t " style="left:475.5px;top:336.86px;font-size:12.8px;line-height:16px;color:#172B4D;font-weight:normal;">Разработка логической мод…</div>
<div class="t" style="left:758px;top:336.86px;width:82px;overflow:hidden;font-size:12.8px;line-height:16px;color:#172B4D;-webkit-mask-image:linear-gradient(90deg,#000 85%,transparent)">09.03.2026 9:00</div>
<div class="t" style="left:848px;top:336.86px;width:82px;overflow:hidden;font-size:12.8px;line-height:16px;color:#172B4D;-webkit-mask-image:linear-gradient(90deg,#000 85%,transparent)">13.03.2026 18:00</div>
<div class="t " style="left:942.5px;top:336.86px;font-size:12.8px;line-height:16px;color:#172B4D;font-weight:normal;">5д</div>
<div class="r" style="left:337px;top:387px;width:784px;height:1px;background:#E4E6EA;"></div>
<div class="r" style="left:345px;top:365.2px;width:2.5px;height:2.5px;background:#7A8290;border-radius:50%"></div>
<div class="r" style="left:345px;top:371.0px;width:2.5px;height:2.5px;background:#7A8290;border-radius:50%"></div>
<div class="r" style="left:345px;top:376.8px;width:2.5px;height:2.5px;background:#7A8290;border-radius:50%"></div>
<div class="r" style="left:351px;top:365.2px;width:2.5px;height:2.5px;background:#7A8290;border-radius:50%"></div>
<div class="r" style="left:351px;top:371.0px;width:2.5px;height:2.5px;background:#7A8290;border-radius:50%"></div>
<div class="r" style="left:351px;top:376.8px;width:2.5px;height:2.5px;background:#7A8290;border-radius:50%"></div>
<div class="t " style="left:364.5px;top:366.97px;font-size:12.5px;line-height:16px;color:#172B4D;font-weight:normal;">5</div>
<svg class="r" style="left:400px;top:366px;" width="15" height="12" viewBox="0 0 15 12" fill="none"><path d="M1 6.5l4 4L14 1.5" stroke="#4FA894" stroke-width="1.7"/></svg>
<div class="r" style="left:457px;top:367px;width:14px;height:14px;background:#44A0E2;border-radius:1.5px"></div>
<svg class="r" style="left:457px;top:367px;" width="14" height="14" viewBox="0 0 14 14" fill="none"><path d="M3.3 7.2l2.5 2.5 5-5" stroke="#fff" stroke-width="1.6"/></svg>
<div class="t " style="left:475.5px;top:366.86px;font-size:12.8px;line-height:16px;color:#172B4D;font-weight:normal;">Проектирование структуры …</div>
<div class="t" style="left:758px;top:366.86px;width:82px;overflow:hidden;font-size:12.8px;line-height:16px;color:#172B4D;-webkit-mask-image:linear-gradient(90deg,#000 85%,transparent)">16.03.2026 9:00</div>
<div class="t" style="left:848px;top:366.86px;width:82px;overflow:hidden;font-size:12.8px;line-height:16px;color:#172B4D;-webkit-mask-image:linear-gradient(90deg,#000 85%,transparent)">27.03.2026 18:00</div>
<div class="t " style="left:942.5px;top:366.86px;font-size:12.8px;line-height:16px;color:#172B4D;font-weight:normal;">10д</div>
<div class="r" style="left:337px;top:418px;width:784px;height:1px;background:#E4E6EA;"></div>
<div class="r" style="left:345px;top:396.2px;width:2.5px;height:2.5px;background:#7A8290;border-radius:50%"></div>
<div class="r" style="left:345px;top:402.0px;width:2.5px;height:2.5px;background:#7A8290;border-radius:50%"></div>
<div class="r" style="left:345px;top:407.8px;width:2.5px;height:2.5px;background:#7A8290;border-radius:50%"></div>
<div class="r" style="left:351px;top:396.2px;width:2.5px;height:2.5px;background:#7A8290;border-radius:50%"></div>
<div class="r" style="left:351px;top:402.0px;width:2.5px;height:2.5px;background:#7A8290;border-radius:50%"></div>
<div class="r" style="left:351px;top:407.8px;width:2.5px;height:2.5px;background:#7A8290;border-radius:50%"></div>
<div class="t " style="left:364.5px;top:397.97px;font-size:12.5px;line-height:16px;color:#172B4D;font-weight:normal;">6</div>
<svg class="r" style="left:399px;top:395px;" width="16" height="16" viewBox="0 0 16 16" fill="none"><path d="M1.5 3.2h12.6v10.6H1.5z" stroke="#56A8E5" stroke-width="1.5"/><path d="M1.2 2.5h13.2v3.8H1.2z" fill="#56A8E5"/><path d="M4.3 1v2.5M11.3 1v2.5" stroke="#56A8E5" stroke-width="1.4"/><rect x="3.6" y="8" width="2.2" height="1.9" fill="#56A8E5"/></svg>
<div class="r" style="left:457px;top:398px;width:14px;height:14px;background:#44A0E2;border-radius:1.5px"></div>
<svg class="r" style="left:457px;top:398px;" width="14" height="14" viewBox="0 0 14 14" fill="none"><path d="M3.3 7.2l2.5 2.5 5-5" stroke="#fff" stroke-width="1.6"/></svg>
<div class="t " style="left:475.5px;top:397.86px;font-size:12.8px;line-height:16px;color:#172B4D;font-weight:normal;">Разработка архитектуры си…</div>
<div class="t" style="left:758px;top:397.86px;width:82px;overflow:hidden;font-size:12.8px;line-height:16px;color:#172B4D;-webkit-mask-image:linear-gradient(90deg,#000 85%,transparent)">23.03.2026 9:00</div>
<div class="t" style="left:848px;top:397.86px;width:82px;overflow:hidden;font-size:12.8px;line-height:16px;color:#172B4D;-webkit-mask-image:linear-gradient(90deg,#000 85%,transparent)">01.04.2026 18:00</div>
<div class="t " style="left:942.5px;top:397.86px;font-size:12.8px;line-height:16px;color:#172B4D;font-weight:normal;">8д</div>
<div class="r" style="left:1121px;top:148px;width:6px;height:628px;background:#DFE1E6;"></div>
<div class="r" style="left:337px;top:760px;width:784px;height:16px;background:#FAFAFA;"></div>
<svg class="r" style="left:341px;top:763px;" width="7" height="11" viewBox="0 0 7 11" fill="none"><path d="M6 0.5v10L0.5 5.5z" fill="#888"/></svg>
<svg class="r" style="left:1109px;top:763px;" width="7" height="11" viewBox="0 0 7 11" fill="none"><path d="M1 0.5v10L6.5 5.5z" fill="#888"/></svg>
<div class="r" style="left:1834px;top:149px;width:11px;height:627px;background:#FCFCFC;"></div>
<div class="r" style="left:1136px;top:156px;width:29px;height:29px;background:#F4F5F7;border-radius:3px"></div>
<svg class="r" style="left:1142px;top:162px;" width="17" height="16" viewBox="0 0 17 16" fill="none"><circle cx="5.1" cy="5.6" r="2.2" stroke="#42526E" stroke-width="1.2"/><circle cx="11.9" cy="2.8" r="2.1" stroke="#42526E" stroke-width="1.2"/><path d="M1.2 13.9A4.8 4.8 0 0 1 10.8 13.9" stroke="#42526E" stroke-width="1.2"/><path d="M8.6 8.2A4.6 4.6 0 0 1 15.4 12" stroke="#42526E" stroke-width="1.2"/></svg>
<div class="r" style="left:1288px;top:156px;width:66px;height:29px;background:#F4F5F7;border-radius:3px"></div>
<div class="t " style="left:1297px;top:163.93px;font-size:12.6px;line-height:16px;color:#42526E;font-weight:normal;">Сегодня</div>
<div class="r" style="left:1363px;top:156px;width:29px;height:29px;background:#F4F5F7;border-radius:3px"></div>
<div class="r" style="left:1393px;top:156px;width:29px;height:29px;background:#F4F5F7;border-radius:3px"></div>
<div class="r" style="left:1423px;top:156px;width:28px;height:29px;background:#F4F5F7;border-radius:3px"></div>
<svg class="r" style="left:1368px;top:161px;" width="18" height="18" viewBox="0 0 18 18" fill="none"><circle cx="8" cy="7" r="5.3" stroke="#42526E" stroke-width="1.5"/><path d="M12 11l4 4" stroke="#42526E" stroke-width="1.6"/><path d="M8 5.3v3.4M6.3 7h3.4" stroke="#42526E" stroke-width="1.5"/></svg>
<svg class="r" style="left:1398px;top:161px;" width="18" height="18" viewBox="0 0 18 18" fill="none"><circle cx="8" cy="7" r="5.3" stroke="#42526E" stroke-width="1.5"/><path d="M12 11l4 4" stroke="#42526E" stroke-width="1.6"/><path d="M6.2 7h3.6" stroke="#42526E" stroke-width="1.5"/></svg>
<svg class="r" style="left:1430px;top:166px;" width="16" height="8" viewBox="0 0 16 8" fill="none"><circle cx="4.3" cy="4" r="1.25" fill="#172B4D"/><circle cx="8.3" cy="4" r="1.25" fill="#172B4D"/><circle cx="12.3" cy="4" r="1.25" fill="#172B4D"/></svg>
<div class="r" style="left:1460px;top:156px;width:29px;height:29px;background:#F4F5F7;border-radius:3px"></div>
<div class="r" style="left:1490px;top:156px;width:29px;height:29px;background:#F4F5F7;border-radius:3px"></div>
<div class="r" style="left:1528px;top:156px;width:29px;height:29px;background:#F4F5F7;border-radius:3px"></div>
<svg class="r" style="left:1466px;top:160px;" width="18" height="18" viewBox="0 0 18 18" fill="none"><rect x="7.2" y="2.5" width="8.6" height="5.8" rx="2.9" transform="rotate(-40 11.5 5.4)" stroke="#A5ADBA" stroke-width="1.2"/><rect x="2.4" y="8.2" width="8.6" height="5.8" rx="2.9" transform="rotate(-40 6.7 11.1)" stroke="#A5ADBA" stroke-width="1.2"/></svg>
<svg class="r" style="left:1496px;top:160px;" width="18" height="18" viewBox="0 0 18 18" fill="none"><rect x="7.2" y="2.5" width="8.6" height="5.8" rx="2.9" transform="rotate(-40 11.5 5.4)" stroke="#A5ADBA" stroke-width="1.2"/><rect x="2.4" y="8.2" width="8.6" height="5.8" rx="2.9" transform="rotate(-40 6.7 11.1)" stroke="#A5ADBA" stroke-width="1.2"/><path d="M1.5 2l13.5 14" stroke="#A5ADBA" stroke-width="1.2"/></svg>
<svg class="r" style="left:1534px;top:161px;" width="17" height="17" viewBox="0 0 17 17" fill="none"><path d="M8 2.2l5.8 5.8L8 13.8 2.2 8z" stroke="#42526E" stroke-width="1.4" stroke-linejoin="round"/></svg>
<div class="r" style="left:1679px;top:156px;width:146px;height:29px;background:#F4F5F7;border-radius:3px"></div>
<svg class="r" style="left:1688px;top:160px;" width="19" height="20" viewBox="0 0 19 20" fill="none"><path d="M9.5 1.5l8 4-8 4-8-4z" stroke="#42526E" stroke-width="1.4" stroke-linejoin="round"/><path d="M1.5 9.5l8 4 8-4M1.5 13.5l8 4 8-4" stroke="#42526E" stroke-width="1.4" stroke-linejoin="round"/></svg>
<div class="t " style="left:1713px;top:160.66px;font-size:12.8px;line-height:17px;color:#42526E;font-weight:normal;">Базовый план</div>
<svg class="r" style="left:1801px;top:167px;" width="11" height="8" viewBox="0 0 11 8" fill="none"><path d="M1 1.5l4.5 4.5 4.5-4.5" stroke="#42526E" stroke-width="1.5"/></svg>
<svg class="r" style="left:1836px;top:154px;" width="9" height="6" viewBox="0 0 9 6" fill="none"><path d="M0.5 5.5L4.5 0.5 8.5 5.5z" fill="#777"/></svg>
<div class="r" style="left:1127px;top:193px;width:707px;height:225px;overflow:hidden">
<div class="r" style="left:0px;top:0px;width:707px;height:1px;background:#EBEBEB;"></div>
<div class="r" style="left:0px;top:20px;width:707px;height:1px;background:#EBEBEB;"></div>
<div class="r" style="left:0px;top:40px;width:707px;height:1px;background:#EBEBEB;"></div>
<div class="r" style="left:-59px;top:0px;width:1px;height:41px;background:#EBEBEB;"></div>
<div class="t" style="left:-58.75px;width:126.25px;text-align:center;top:4.89px;font-size:11px;line-height:14px;color:#9A9A9A;font-weight:bold">23 - 1 Февраль</div>
<div class="r" style="left:-59px;top:21px;width:1px;height:20px;background:#EBEBEB;"></div>
<div class="t" style="left:-58.75px;width:18px;text-align:center;top:24.49px;font-size:11px;line-height:14px;color:#A8A8A8">Пн</div>
<div class="r" style="left:-41px;top:21px;width:1px;height:20px;background:#EBEBEB;"></div>
<div class="t" style="left:-40.714px;width:18px;text-align:center;top:24.49px;font-size:11px;line-height:14px;color:#A8A8A8">Вт</div>
<div class="r" style="left:-23px;top:21px;width:1px;height:20px;background:#EBEBEB;"></div>
<div class="t" style="left:-22.677999999999997px;width:18px;text-align:center;top:24.49px;font-size:11px;line-height:14px;color:#A8A8A8">Ср</div>
<div class="r" style="left:-5px;top:21px;width:1px;height:20px;background:#EBEBEB;"></div>
<div class="t" style="left:-4.641999999999996px;width:18px;text-align:center;top:24.49px;font-size:11px;line-height:14px;color:#A8A8A8">Чт</div>
<div class="r" style="left:13px;top:21px;width:1px;height:20px;background:#EBEBEB;"></div>
<div class="t" style="left:13.394000000000005px;width:18px;text-align:center;top:24.49px;font-size:11px;line-height:14px;color:#A8A8A8">Пт</div>
<div class="r" style="left:31px;top:21px;width:1px;height:20px;background:#EBEBEB;"></div>
<div class="t" style="left:31.430000000000007px;width:18px;text-align:center;top:24.49px;font-size:11px;line-height:14px;color:#A8A8A8">Сб</div>
<div class="r" style="left:49px;top:21px;width:1px;height:20px;background:#EBEBEB;"></div>
<div class="t" style="left:49.46600000000001px;width:18px;text-align:center;top:24.49px;font-size:11px;line-height:14px;color:#A8A8A8">Вс</div>
<div class="r" style="left:67px;top:0px;width:1px;height:41px;background:#EBEBEB;"></div>
<div class="t" style="left:67.5px;width:126.25px;text-align:center;top:4.89px;font-size:11px;line-height:14px;color:#9A9A9A;font-weight:bold">2 - 8 Март</div>
<div class="r" style="left:67px;top:21px;width:1px;height:20px;background:#EBEBEB;"></div>
<div class="t" style="left:67.5px;width:18px;text-align:center;top:24.49px;font-size:11px;line-height:14px;color:#A8A8A8">Пн</div>
<div class="r" style="left:85px;top:21px;width:1px;height:20px;background:#EBEBEB;"></div>
<div class="t" style="left:85.536px;width:18px;text-align:center;top:24.49px;font-size:11px;line-height:14px;color:#A8A8A8">Вт</div>
<div class="r" style="left:103px;top:21px;width:1px;height:20px;background:#EBEBEB;"></div>
<div class="t" style="left:103.572px;width:18px;text-align:center;top:24.49px;font-size:11px;line-height:14px;color:#A8A8A8">Ср</div>
<div class="r" style="left:121px;top:21px;width:1px;height:20px;background:#EBEBEB;"></div>
<div class="t" style="left:121.608px;width:18px;text-align:center;top:24.49px;font-size:11px;line-height:14px;color:#A8A8A8">Чт</div>
<div class="r" style="left:139px;top:21px;width:1px;height:20px;background:#EBEBEB;"></div>
<div class="t" style="left:139.644px;width:18px;text-align:center;top:24.49px;font-size:11px;line-height:14px;color:#A8A8A8">Пт</div>
<div class="r" style="left:157px;top:21px;width:1px;height:20px;background:#EBEBEB;"></div>
<div class="t" style="left:157.68px;width:18px;text-align:center;top:24.49px;font-size:11px;line-height:14px;color:#A8A8A8">Сб</div>
<div class="r" style="left:175px;top:21px;width:1px;height:20px;background:#EBEBEB;"></div>
<div class="t" style="left:175.716px;width:18px;text-align:center;top:24.49px;font-size:11px;line-height:14px;color:#A8A8A8">Вс</div>
<div class="r" style="left:193px;top:0px;width:1px;height:41px;background:#EBEBEB;"></div>
<div class="t" style="left:193.75px;width:126.25px;text-align:center;top:4.89px;font-size:11px;line-height:14px;color:#9A9A9A;font-weight:bold">9 - 15 Март</div>
<div class="r" style="left:193px;top:21px;width:1px;height:20px;background:#EBEBEB;"></div>
<div class="t" style="left:193.75px;width:18px;text-align:center;top:24.49px;font-size:11px;line-height:14px;color:#A8A8A8">Пн</div>
<div class="r" style="left:211px;top:21px;width:1px;height:20px;background:#EBEBEB;"></div>
<div class="t" style="left:211.786px;width:18px;text-align:center;top:24.49px;font-size:11px;line-height:14px;color:#A8A8A8">Вт</div>
<div class="r" style="left:229px;top:21px;width:1px;height:20px;background:#EBEBEB;"></div>
<div class="t" style="left:229.822px;width:18px;text-align:center;top:24.49px;font-size:11px;line-height:14px;color:#A8A8A8">Ср</div>
<div class="r" style="left:247px;top:21px;width:1px;height:20px;background:#EBEBEB;"></div>
<div class="t" style="left:247.858px;width:18px;text-align:center;top:24.49px;font-size:11px;line-height:14px;color:#A8A8A8">Чт</div>
<div class="r" style="left:265px;top:21px;width:1px;height:20px;background:#EBEBEB;"></div>
<div class="t" style="left:265.894px;width:18px;text-align:center;top:24.49px;font-size:11px;line-height:14px;color:#A8A8A8">Пт</div>
<div class="r" style="left:283px;top:21px;width:1px;height:20px;background:#EBEBEB;"></div>
<div class="t" style="left:283.93px;width:18px;text-align:center;top:24.49px;font-size:11px;line-height:14px;color:#A8A8A8">Сб</div>
<div class="r" style="left:301px;top:21px;width:1px;height:20px;background:#EBEBEB;"></div>
<div class="t" style="left:301.966px;width:18px;text-align:center;top:24.49px;font-size:11px;line-height:14px;color:#A8A8A8">Вс</div>
<div class="r" style="left:320px;top:0px;width:1px;height:41px;background:#EBEBEB;"></div>
<div class="t" style="left:320.0px;width:126.25px;text-align:center;top:4.89px;font-size:11px;line-height:14px;color:#9A9A9A;font-weight:bold">16 - 22 Март</div>
<div class="r" style="left:320px;top:21px;width:1px;height:20px;background:#EBEBEB;"></div>
<div class="t" style="left:320.0px;width:18px;text-align:center;top:24.49px;font-size:11px;line-height:14px;color:#A8A8A8">Пн</div>
<div class="r" style="left:338px;top:21px;width:1px;height:20px;background:#EBEBEB;"></div>
<div class="t" style="left:338.036px;width:18px;text-align:center;top:24.49px;font-size:11px;line-height:14px;color:#A8A8A8">Вт</div>
<div class="r" style="left:356px;top:21px;width:1px;height:20px;background:#EBEBEB;"></div>
<div class="t" style="left:356.072px;width:18px;text-align:center;top:24.49px;font-size:11px;line-height:14px;color:#A8A8A8">Ср</div>
<div class="r" style="left:374px;top:21px;width:1px;height:20px;background:#EBEBEB;"></div>
<div class="t" style="left:374.108px;width:18px;text-align:center;top:24.49px;font-size:11px;line-height:14px;color:#A8A8A8">Чт</div>
<div class="r" style="left:392px;top:21px;width:1px;height:20px;background:#EBEBEB;"></div>
<div class="t" style="left:392.144px;width:18px;text-align:center;top:24.49px;font-size:11px;line-height:14px;color:#A8A8A8">Пт</div>
<div class="r" style="left:410px;top:21px;width:1px;height:20px;background:#EBEBEB;"></div>
<div class="t" style="left:410.18px;width:18px;text-align:center;top:24.49px;font-size:11px;line-height:14px;color:#A8A8A8">Сб</div>
<div class="r" style="left:428px;top:21px;width:1px;height:20px;background:#EBEBEB;"></div>
<div class="t" style="left:428.216px;width:18px;text-align:center;top:24.49px;font-size:11px;line-height:14px;color:#A8A8A8">Вс</div>
<div class="r" style="left:446px;top:0px;width:1px;height:41px;background:#EBEBEB;"></div>
<div class="t" style="left:446.25px;width:126.25px;text-align:center;top:4.89px;font-size:11px;line-height:14px;color:#9A9A9A;font-weight:bold">23 - 29 Март</div>
<div class="r" style="left:446px;top:21px;width:1px;height:20px;background:#EBEBEB;"></div>
<div class="t" style="left:446.25px;width:18px;text-align:center;top:24.49px;font-size:11px;line-height:14px;color:#A8A8A8">Пн</div>
<div class="r" style="left:464px;top:21px;width:1px;height:20px;background:#EBEBEB;"></div>
<div class="t" style="left:464.286px;width:18px;text-align:center;top:24.49px;font-size:11px;line-height:14px;color:#A8A8A8">Вт</div>
<div class="r" style="left:482px;top:21px;width:1px;height:20px;background:#EBEBEB;"></div>
<div class="t" style="left:482.322px;width:18px;text-align:center;top:24.49px;font-size:11px;line-height:14px;color:#A8A8A8">Ср</div>
<div class="r" style="left:500px;top:21px;width:1px;height:20px;background:#EBEBEB;"></div>
<div class="t" style="left:500.358px;width:18px;text-align:center;top:24.49px;font-size:11px;line-height:14px;color:#A8A8A8">Чт</div>
<div class="r" style="left:518px;top:21px;width:1px;height:20px;background:#EBEBEB;"></div>
<div class="t" style="left:518.394px;width:18px;text-align:center;top:24.49px;font-size:11px;line-height:14px;color:#A8A8A8">Пт</div>
<div class="r" style="left:536px;top:21px;width:1px;height:20px;background:#EBEBEB;"></div>
<div class="t" style="left:536.4300000000001px;width:18px;text-align:center;top:24.49px;font-size:11px;line-height:14px;color:#A8A8A8">Сб</div>
<div class="r" style="left:554px;top:21px;width:1px;height:20px;background:#EBEBEB;"></div>
<div class="t" style="left:554.466px;width:18px;text-align:center;top:24.49px;font-size:11px;line-height:14px;color:#A8A8A8">Вс</div>
<div class="r" style="left:572px;top:0px;width:1px;height:41px;background:#EBEBEB;"></div>
<div class="t" style="left:572.5px;width:126.25px;text-align:center;top:4.89px;font-size:11px;line-height:14px;color:#9A9A9A;font-weight:bold">30 - 5 Март</div>
<div class="r" style="left:572px;top:21px;width:1px;height:20px;background:#EBEBEB;"></div>
<div class="t" style="left:572.5px;width:18px;text-align:center;top:24.49px;font-size:11px;line-height:14px;color:#A8A8A8">Пн</div>
<div class="r" style="left:590px;top:21px;width:1px;height:20px;background:#EBEBEB;"></div>
<div class="t" style="left:590.5360000000001px;width:18px;text-align:center;top:24.49px;font-size:11px;line-height:14px;color:#A8A8A8">Вт</div>
<div class="r" style="left:608px;top:21px;width:1px;height:20px;background:#EBEBEB;"></div>
<div class="t" style="left:608.572px;width:18px;text-align:center;top:24.49px;font-size:11px;line-height:14px;color:#A8A8A8">Ср</div>
<div class="r" style="left:626px;top:21px;width:1px;height:20px;background:#EBEBEB;"></div>
<div class="t" style="left:626.608px;width:18px;text-align:center;top:24.49px;font-size:11px;line-height:14px;color:#A8A8A8">Чт</div>
<div class="r" style="left:644px;top:21px;width:1px;height:20px;background:#EBEBEB;"></div>
<div class="t" style="left:644.644px;width:18px;text-align:center;top:24.49px;font-size:11px;line-height:14px;color:#A8A8A8">Пт</div>
<div class="r" style="left:662px;top:21px;width:1px;height:20px;background:#EBEBEB;"></div>
<div class="t" style="left:662.6800000000001px;width:18px;text-align:center;top:24.49px;font-size:11px;line-height:14px;color:#A8A8A8">Сб</div>
<div class="r" style="left:680px;top:21px;width:1px;height:20px;background:#EBEBEB;"></div>
<div class="t" style="left:680.716px;width:18px;text-align:center;top:24.49px;font-size:11px;line-height:14px;color:#A8A8A8">Вс</div>
<div class="r" style="left:-59px;top:41px;width:1px;height:184px;background:#EFEFEF;"></div>
<div class="r" style="left:67px;top:41px;width:1px;height:184px;background:#EFEFEF;"></div>
<div class="r" style="left:193px;top:41px;width:1px;height:184px;background:#EFEFEF;"></div>
<div class="r" style="left:320px;top:41px;width:1px;height:184px;background:#EFEFEF;"></div>
<div class="r" style="left:446px;top:41px;width:1px;height:184px;background:#EFEFEF;"></div>
<div class="r" style="left:572px;top:41px;width:1px;height:184px;background:#EFEFEF;"></div>
<div class="r" style="left:698px;top:41px;width:1px;height:184px;background:#EFEFEF;"></div>
<div class="r" style="left:0px;top:71px;width:707px;height:1px;background:#EFEFEF;"></div>
<div class="r" style="left:0px;top:102px;width:707px;height:1px;background:#EFEFEF;"></div>
<div class="r" style="left:0px;top:132px;width:707px;height:1px;background:#EFEFEF;"></div>
<div class="r" style="left:0px;top:133px;width:707px;height:30px;background:#F4F7FD;"></div>
<div class="r" style="left:0px;top:163px;width:707px;height:1px;background:#EFEFEF;"></div>
<div class="r" style="left:0px;top:194px;width:707px;height:1px;background:#EFEFEF;"></div>
<div class="r" style="left:0px;top:225px;width:707px;height:1px;background:#EFEFEF;"></div>
</div>
<div class="r" style="left:1194px;top:325px;width:1px;height:31px;background:#EFEFEF;"></div>
<div class="r" style="left:1320px;top:325px;width:1px;height:31px;background:#EFEFEF;"></div>
<div class="r" style="left:1447px;top:325px;width:1px;height:31px;background:#EFEFEF;"></div>
<div class="r" style="left:1573px;top:325px;width:1px;height:31px;background:#EFEFEF;"></div>
<div class="r" style="left:1699px;top:325px;width:1px;height:31px;background:#EFEFEF;"></div>
<div class="r" style="left:1825px;top:325px;width:1px;height:31px;background:#EFEFEF;"></div>
<div class="r" style="left:1808px;top:194px;width:26px;height:40px;background:#fff;"></div>
<div class="r" style="left:1807px;top:194px;width:1px;height:40px;background:#EBEBEB;"></div>
<svg class="r" style="left:1812px;top:204px;" width="18" height="16" viewBox="0 0 18 16" fill="none"><circle cx="3.2" cy="3.9" r="1.15" fill="#42526E"/><circle cx="3.2" cy="8.4" r="1.15" fill="#42526E"/><circle cx="3.2" cy="12.8" r="1.15" fill="#42526E"/><path d="M6.2 3.9h10M6.2 8.4h10M6.2 12.8h10" stroke="#5E6C84" stroke-width="1.3"/></svg>
<div class="r" style="left:1808px;top:233px;width:26px;height:1px;background:#EBEBEB;"></div>
<div class="r" style="left:1131px;top:235px;width:1px;height:182px;background:#2F9E44;"></div>
<div class="r" style="left:1203px;top:243.0px;width:29px;height:12px;background:#62AFB9;border-radius:1px"></div>
<div class="r" style="left:1203px;top:257.2px;width:28px;height:6px;background:#CDCDCD;border:1px solid #959595;border-radius:1.2px;box-sizing:border-box"></div>
<div class="r" style="left:1239px;top:273.5px;width:101px;height:12px;background:#62AFB9;border-radius:1px"></div>
<div class="r" style="left:1239px;top:287.7px;width:100px;height:6px;background:#CDCDCD;border:1px solid #959595;border-radius:1.2px;box-sizing:border-box"></div>
<div class="r" style="left:1329px;top:304.0px;width:11px;height:12px;background:#62AFB9;border-radius:1px"></div>
<div class="r" style="left:1329px;top:318.2px;width:10px;height:6px;background:#CDCDCD;border:1px solid #959595;border-radius:1.2px;box-sizing:border-box"></div>
<div class="r" style="left:1329px;top:334.5px;width:83px;height:12px;background:#62AFB9;border-radius:1px"></div>
<div class="r" style="left:1329px;top:348.7px;width:82px;height:6px;background:#CDCDCD;border:1px solid #959595;border-radius:1.2px;box-sizing:border-box"></div>
<div class="r" style="left:1582px;top:365.3px;width:208px;height:12px;background:#62AFB9;border-radius:1px"></div>
<div class="r" style="left:1582px;top:379.5px;width:207px;height:6px;background:#CDCDCD;border:1px solid #959595;border-radius:1.2px;box-sizing:border-box"></div>
<div class="r" style="left:1582px;top:395.5px;width:172px;height:12px;background:#62AFB9;border-radius:1px"></div>
<div class="r" style="left:1582px;top:409.7px;width:171px;height:6px;background:#CDCDCD;border:1px solid #959595;border-radius:1.2px;box-sizing:border-box"></div>
<svg class="r" style="left:1836px;top:746px;" width="9" height="6" viewBox="0 0 9 6" fill="none"><path d="M0.5 0.5L4.5 5.5 8.5 0.5z" fill="#777"/></svg>
<div class="r" style="left:1127px;top:760px;width:707px;height:16px;background:#FAFAFA;"></div>
<svg class="r" style="left:1131px;top:763px;" width="7" height="11" viewBox="0 0 7 11" fill="none"><path d="M6 0.5v10L0.5 5.5z" fill="#888"/></svg>
<svg class="r" style="left:1822px;top:763px;" width="7" height="11" viewBox="0 0 7 11" fill="none"><path d="M1 0.5v10L6.5 5.5z" fill="#888"/></svg>
<div class="r" style="left:1180px;top:763.8px;width:80px;height:9px;background:#8A8A8A;border-radius:4.5px"></div>
</body></html>
